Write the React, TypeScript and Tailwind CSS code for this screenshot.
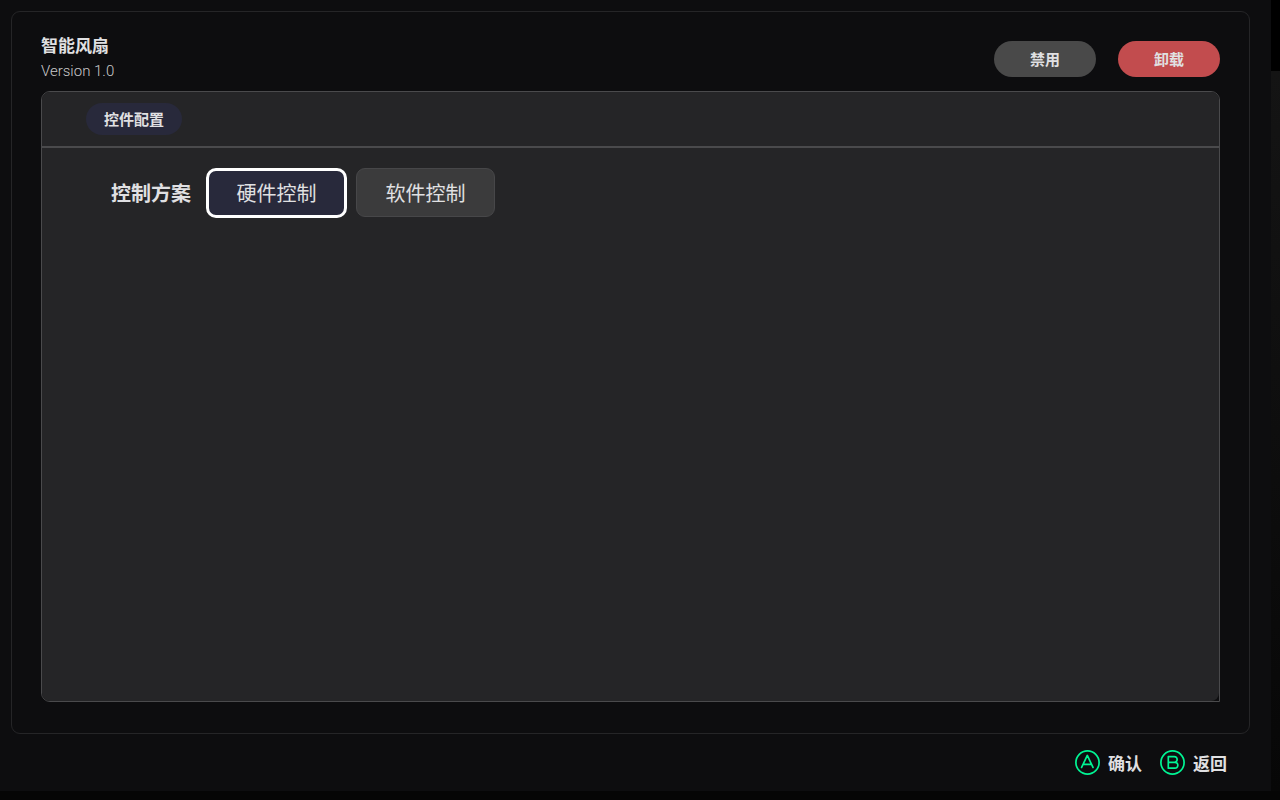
type GlyphProps = { letter: "A" | "B" };

function PadGlyph({ letter }: GlyphProps) {
  return (
    <svg
      className="size-[25px] shrink-0"
      viewBox="0 0 25 25"
      fill="none"
      stroke="#00f594"
      strokeWidth="1.7"
      strokeLinecap="round"
      strokeLinejoin="round"
      aria-hidden="true"
    >
      <circle cx="12.5" cy="12.5" r="11.6" />
      {letter === "A" ? (
        <path d="M6.6 17.4 L12.3 5.4 L18 17.4 M8.2 14.3 H16.4" />
      ) : (
        <path d="M8.3 6.6 V18.2 H15 A2.8 2.8 0 0 0 17.8 15.3 A2.8 2.8 0 0 0 15 12.3 H8.3 M8.3 6.6 H14.4 A2.7 2.7 0 0 1 17.1 9.4 A2.7 2.7 0 0 1 14.4 12.3" />
      )}
    </svg>
  );
}

function Header() {
  return (
    <header className="flex items-start justify-between">
      <div>
        <h1 className="text-[17px] leading-[26px] font-bold">智能风扇</h1>
        <p className="font-['Roboto'] text-[15px] leading-[26px] font-light text-[#c8c8ca]">Version 1.0</p>
      </div>
      <div className="flex gap-[22px] pt-[9px]">
        <button type="button" className="h-9 w-[102px] rounded-full bg-[#494949] text-[15px] font-bold">
          禁用
        </button>
        <button type="button" className="h-9 w-[102px] rounded-full bg-[#c24c4e] text-[15px] font-bold">
          卸载
        </button>
      </div>
    </header>
  );
}

function ConfigPanel() {
  return (
    <section className="mt-[7px] flex grow flex-col rounded-[9px] rounded-br-none border border-[#4a4a4c]">
      <div className="flex grow flex-col rounded-[8px] bg-[#252527]">
        <nav className="flex h-14 items-center border-b-2 border-[#4a4a4c] pl-11">
          <button type="button" className="h-8 rounded-full bg-[#28293b] px-[18px] text-[15px] font-bold">
            控件配置
          </button>
        </nav>
        <div className="flex items-center pt-5 pl-[69px] text-xl">
          <span className="font-bold" id="scheme-label">控制方案</span>
          <div className="ml-[15px] flex gap-[9px]" role="group" aria-labelledby="scheme-label">
            <button
              type="button"
              aria-pressed="true"
              className="h-[50px] w-[141px] rounded-[10px] border-3 border-white bg-[#28293b]"
            >
              硬件控制
            </button>
            <button
              type="button"
              aria-pressed="false"
              className="h-[49px] w-[139px] rounded-[9px] border border-[#474749] bg-[#3b3b3c]"
            >
              软件控制
            </button>
          </div>
        </div>
      </div>
    </section>
  );
}

export default function App() {
  return (
    <div className="grid min-h-screen grid-cols-[1fr_9px] grid-rows-[1fr_9px] bg-[#050505] font-['Noto_Sans_CJK_SC',sans-serif] text-[#e0e0e2]">
      <div className="flex flex-col bg-[#0d0d0f] pt-[11px] pr-[21px] pl-[11px]">
        <main className="flex grow flex-col rounded-[9px] border border-[#252527] px-[29px] pt-5 pb-[31px]">
          <Header />
          <ConfigPanel />
        </main>
        <footer className="flex h-[57px] items-center justify-end gap-[18px] pr-[23px] text-[17px] font-bold">
          <button type="button" className="flex items-center gap-2">
            <PadGlyph letter="A" />
            确认
          </button>
          <button type="button" className="flex items-center gap-2">
            <PadGlyph letter="B" />
            返回
          </button>
        </footer>
      </div>
      <div className="flex flex-col">
        <div className="h-[71px] bg-black" />
        <div className="grow bg-linear-to-b from-[#141414] via-[#0e0e0e] to-[#070707]" />
      </div>
    </div>
  );
}
